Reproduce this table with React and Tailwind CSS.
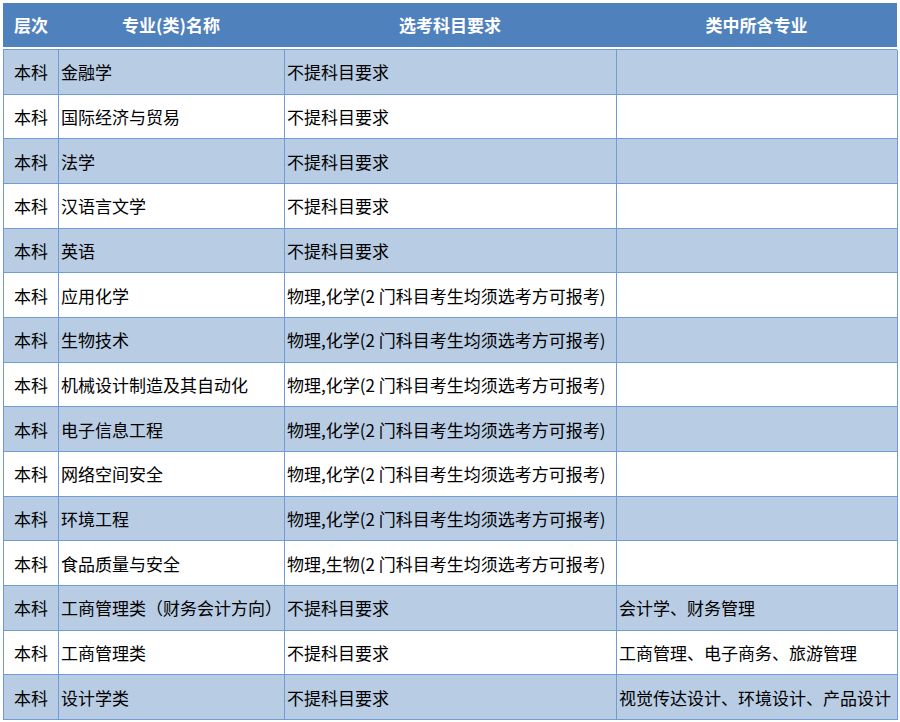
const rows = [
  ["金融学", "不提科目要求", ""],
  ["国际经济与贸易", "不提科目要求", ""],
  ["法学", "不提科目要求", ""],
  ["汉语言文学", "不提科目要求", ""],
  ["英语", "不提科目要求", ""],
  ["应用化学", "物理,化学(2 门科目考生均须选考方可报考)", ""],
  ["生物技术", "物理,化学(2 门科目考生均须选考方可报考)", ""],
  ["机械设计制造及其自动化", "物理,化学(2 门科目考生均须选考方可报考)", ""],
  ["电子信息工程", "物理,化学(2 门科目考生均须选考方可报考)", ""],
  ["网络空间安全", "物理,化学(2 门科目考生均须选考方可报考)", ""],
  ["环境工程", "物理,化学(2 门科目考生均须选考方可报考)", ""],
  ["食品质量与安全", "物理,生物(2 门科目考生均须选考方可报考)", ""],
  ["工商管理类（财务会计方向）", "不提科目要求", "会计学、财务管理"],
  ["工商管理类", "不提科目要求", "工商管理、电子商务、旅游管理"],
  ["设计学类", "不提科目要求", "视觉传达设计、环境设计、产品设计"],
];

const font = { fontFamily: '"Noto Sans CJK SC", "Noto Sans", sans-serif' };

export default function App() {
  return (
    <div className="w-[900px] h-[722px] bg-white pt-[3px] pl-[3px] overflow-hidden" style={font}>
      <div className="w-[894px]">
        <div className="grid grid-cols-[55px_226px_332px_281px] h-[44px] bg-[#4f81bd] text-white font-bold text-[17px] items-center">
          <div className="pl-[11px]">层次</div>
          <div className="text-center">专业(类)名称</div>
          <div className="text-center">选考科目要求</div>
          <div className="text-center">类中所含专业</div>
        </div>
        <div className="h-[2px] bg-white" />
        <div className="border-t border-l border-[#6f9bd6]">
          {rows.map((r, i) => (
            <div
              key={i}
              className={`grid grid-cols-[55px_226px_332px_281px] h-[44.67px] text-[17px] text-black leading-none ${i % 2 === 0 ? "bg-[#b8cce4]" : "bg-white"}`}
            >
              <div className="border-r border-b border-[#6f9bd6] flex items-center justify-center">本科</div>
              <div className="border-r border-b border-[#6f9bd6] flex items-center pl-[2px] whitespace-nowrap">{r[0]}</div>
              <div className="border-r border-b border-[#6f9bd6] flex items-center pl-[2px] whitespace-nowrap">{r[1]}</div>
              <div className="border-r border-b border-[#6f9bd6] flex items-center pl-[2px] whitespace-nowrap">{r[2]}</div>
            </div>
          ))}
        </div>
      </div>
    </div>
  );
}
